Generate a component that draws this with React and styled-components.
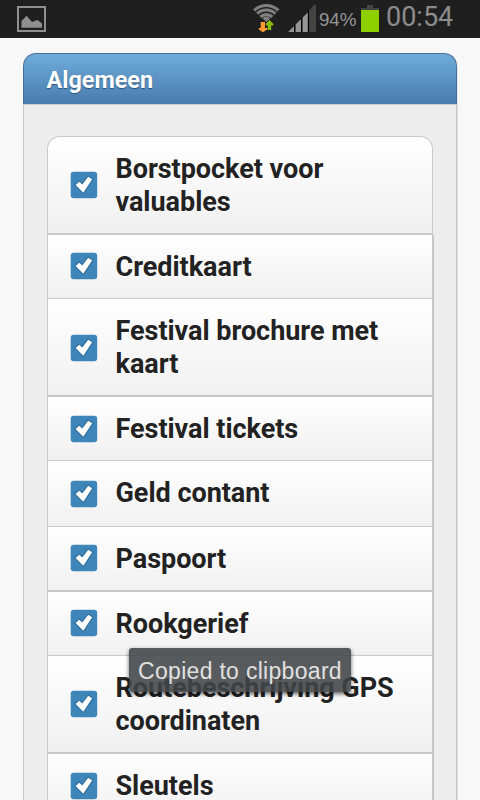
import React from 'react';
import styled, { createGlobalStyle } from 'styled-components';

const GlobalStyle = createGlobalStyle`
  * { box-sizing: border-box; }
  html, body { margin: 0; height: 800px; overflow: hidden; background: #f8f8f8; }
`;
const Screen = styled.main`
  position: relative;
  width: 480px;
  height: 800px;
  overflow: hidden;
  background: #f8f8f8;
  font-family: Roboto, sans-serif;
`;
const StatusBar = styled.header`
  display: flex;
  align-items: flex-start;
  height: 38px;
  background: #1f1f1f;
  color: #959595;
  font-family: "Liberation Sans", Roboto, sans-serif;
`;
const PictureIcon = styled.svg`
  display: block;
  margin: 6px 0 0 17px;
`;
const WifiIcon = styled.svg`
  display: block;
  margin-left: 206px;
`;
const SignalIcon = styled.svg`
  display: block;
  margin: 5px 0 0 7px;
`;
const Percent = styled.span`
  width: 38px;
  margin: 9px 0 0 2px;
  font-size: 18.8px;
  line-height: 22px;
  letter-spacing: -0.1px;
  white-space: nowrap;
`;
const BatteryIcon = styled.svg`
  display: block;
  margin: 5px 0 0 4px;
`;
const Clock = styled.time`
  margin: 2px 0 0 7px;
  color: #8c8c8c;
  font-family: Roboto, sans-serif;
  font-size: 27px;
  font-weight: 400;
  line-height: 30px;
  white-space: nowrap;
`;
const Panel = styled.section`
  width: 434px;
  margin: 15px 0 0 23px;
`;
const PanelHeading = styled.h1`
  height: 51px;
  margin: 0;
  padding: 0 22.5px;
  border: 1px solid #456f9a;
  border-bottom: 0;
  border-radius: 13px 13px 0 0;
  background: linear-gradient(#6facd9, #497bae);
  box-shadow: 1px 0 0 #e8e8e8;
  color: #fff;
  font-size: 23.4px;
  font-weight: 700;
  line-height: 53px;
  text-shadow: 0 1px 1px #2e5276;
`;
const PanelBody = styled.div`
  height: 720px;
  padding: 31px 23px 0 23px;
  border: 1px solid #c8c8c8;
  border-top-color: #cdcdcd;
  box-shadow: 1px 0 0 #dedede;
  background: #ededed;
`;
const List = styled.ul`
  width: 387px;
  margin: 0;
  padding: 0;
  list-style: none;
`;
const Row = styled.li`
  display: flex;
  align-items: center;
  gap: 17.5px;
  width: ${({ $first }) => ($first ? '386px' : '387px')};
  height: ${({ $height }) => $height}px;
  padding: 0 10px 0 22px;
  border: 0 solid #c8c8c8;
  border-left-width: 1px;
  border-top-width: ${({ $first }) => ($first ? '1px' : '0')};
  border-right-width: ${({ $first }) => ($first ? '1px' : '2px')};
  border-bottom-width: ${({ $line }) => $line}px;
  border-radius: ${({ $first }) => ($first ? '13px 13px 0 0' : '0')};
  background: linear-gradient(#fff, #f0f0f0);
`;
const CheckBox = styled.svg`
  flex: none;
  display: block;
  margin-top: ${({ $nudge }) => $nudge * 2}px;
`;
const Label = styled.span`
  margin-top: ${({ $nudge }) => $nudge * 2}px;
  color: #222;
  font-size: 27px;
  font-weight: 700;
  line-height: 33px;
  letter-spacing: -0.03px;
  text-shadow: 0 1px 0 #fff;
  white-space: pre;
`;
const Toast = styled.div`
  position: absolute;
  left: 129px;
  top: 648px;
  width: 222px;
  height: 44px;
  border-radius: 3px;
  background: #404448e0;
  box-shadow: 0 2px 4px #0009;
  color: #e0e0e0;
  font-family: "Liberation Sans", sans-serif;
  font-size: 23px;
  letter-spacing: 0.3px;
  line-height: 46px;
  text-align: center;
  white-space: nowrap;
`;

const items = [
  { text: 'Borstpocket voor\nvaluables', height: 99, line: 2, box: 0, label: 1 },
  { text: 'Creditkaart', height: 64, line: 1, box: -1, label: 1 },
  { text: 'Festival brochure met\nkaart', height: 98, line: 2, box: 1, label: 1 },
  { text: 'Festival tickets', height: 64, line: 1, box: 0, label: 1 },
  { text: 'Geld contant', height: 66, line: 1, box: 0, label: 0 },
  { text: 'Paspoort', height: 65, line: 2, box: -1, label: 1 },
  { text: 'Rookgerief', height: 64, line: 1, box: -1, label: 1 },
  { text: 'Routebeschrijving GPS\ncoordinaten', height: 98, line: 2, box: 0, label: 1 },
  { text: 'Sleutels', height: 65, line: 1, box: 0, label: 0 },
];

const tick = 'M5.600 13.900L9.200 10.700L12.300 13.600L18.200 5.700L22.200 8.300L13.300 21.700Z';

const Check = ({ nudge }) => (
  <CheckBox width="28" height="28" viewBox="0 0 28 28" $nudge={nudge}>
    <rect x=".7" y=".7" width="26.500" height="26.500" rx="3" fill="#3e85b9" />
    <path d={tick} fill="#235c85" stroke="#235c85" strokeWidth="2.200" strokeLinejoin="round" opacity=".55" />
    <path d={tick} fill="#fff" />
  </CheckBox>
);

export default function App() {
  return (
    <Screen>
      <GlobalStyle />
      <StatusBar>
        <PictureIcon width="29" height="26" viewBox="0 0 29 26">
          <rect x="1" y="1" width="27" height="24" fill="none" stroke="#8f8f8f" strokeWidth="2" />
          <path d="M4.500 21.700V15L9.500 9.700L15 16L20.500 14L25 17.500V21.700Z" fill="#8f8f8f" />
        </PictureIcon>
        <WifiIcon width="29" height="34" viewBox="0 0 29 34">
          <g fill="none" stroke="#808080" strokeWidth="3.100">
            <path d="M2.200 10.500A17 17 0 0 1 26.400 10.500" />
            <path d="M5.200 13.700A13 13 0 0 1 23.400 13.700" />
            <path d="M8.300 16.900A9 9 0 0 1 20.300 16.900" />
          </g>
          <path d="M10.300 18.200Q14.300 14.800 18.300 18.200L14.300 22Z" fill="#808080" />
          <path d="M8.700 22h4.300v6h2.300v1.500L11 32.300L6.800 29.500V28h1.900z" fill="#ff9b30" />
          <path d="M17.500 20L21.300 23.800V25.500H19.200V30H15.700V25.500H13.800V23.800Z" fill="#86bd00" />
        </WifiIcon>
        <SignalIcon width="29" height="27" viewBox="0 0 29 27">
          <path d="M0 27L21 5.500V27Z" fill="#000" />
          <path d="M0 27L6 21V27ZM7.500 19.500L13 14V27H7.500ZM14.500 12.500L19.800 7.200V27H14.500Z" fill="#959595" />
          <path d="M21 6L26 0H28V27H21Z" fill="#444" />
        </SignalIcon>
        <Percent>94%</Percent>
        <BatteryIcon width="18" height="27" viewBox="0 0 18 27">
          <path d="M0 3h6V0h6v3h6v2H0z" fill="#444" />
          <path d="M0 5h18v22H0z" fill="#8fd000" />
        </BatteryIcon>
        <Clock>00:54</Clock>
      </StatusBar>
      <Panel>
        <PanelHeading>Algemeen</PanelHeading>
        <PanelBody>
          <List>
            {items.map((item, i) => (
              <Row key={item.text} $first={i === 0} $height={item.height} $line={item.line}>
                <Check nudge={item.box} />
                <Label $nudge={item.label}>{item.text}</Label>
              </Row>
            ))}
          </List>
        </PanelBody>
      </Panel>
      <Toast>Copied to clipboard</Toast>
    </Screen>
  );
}
